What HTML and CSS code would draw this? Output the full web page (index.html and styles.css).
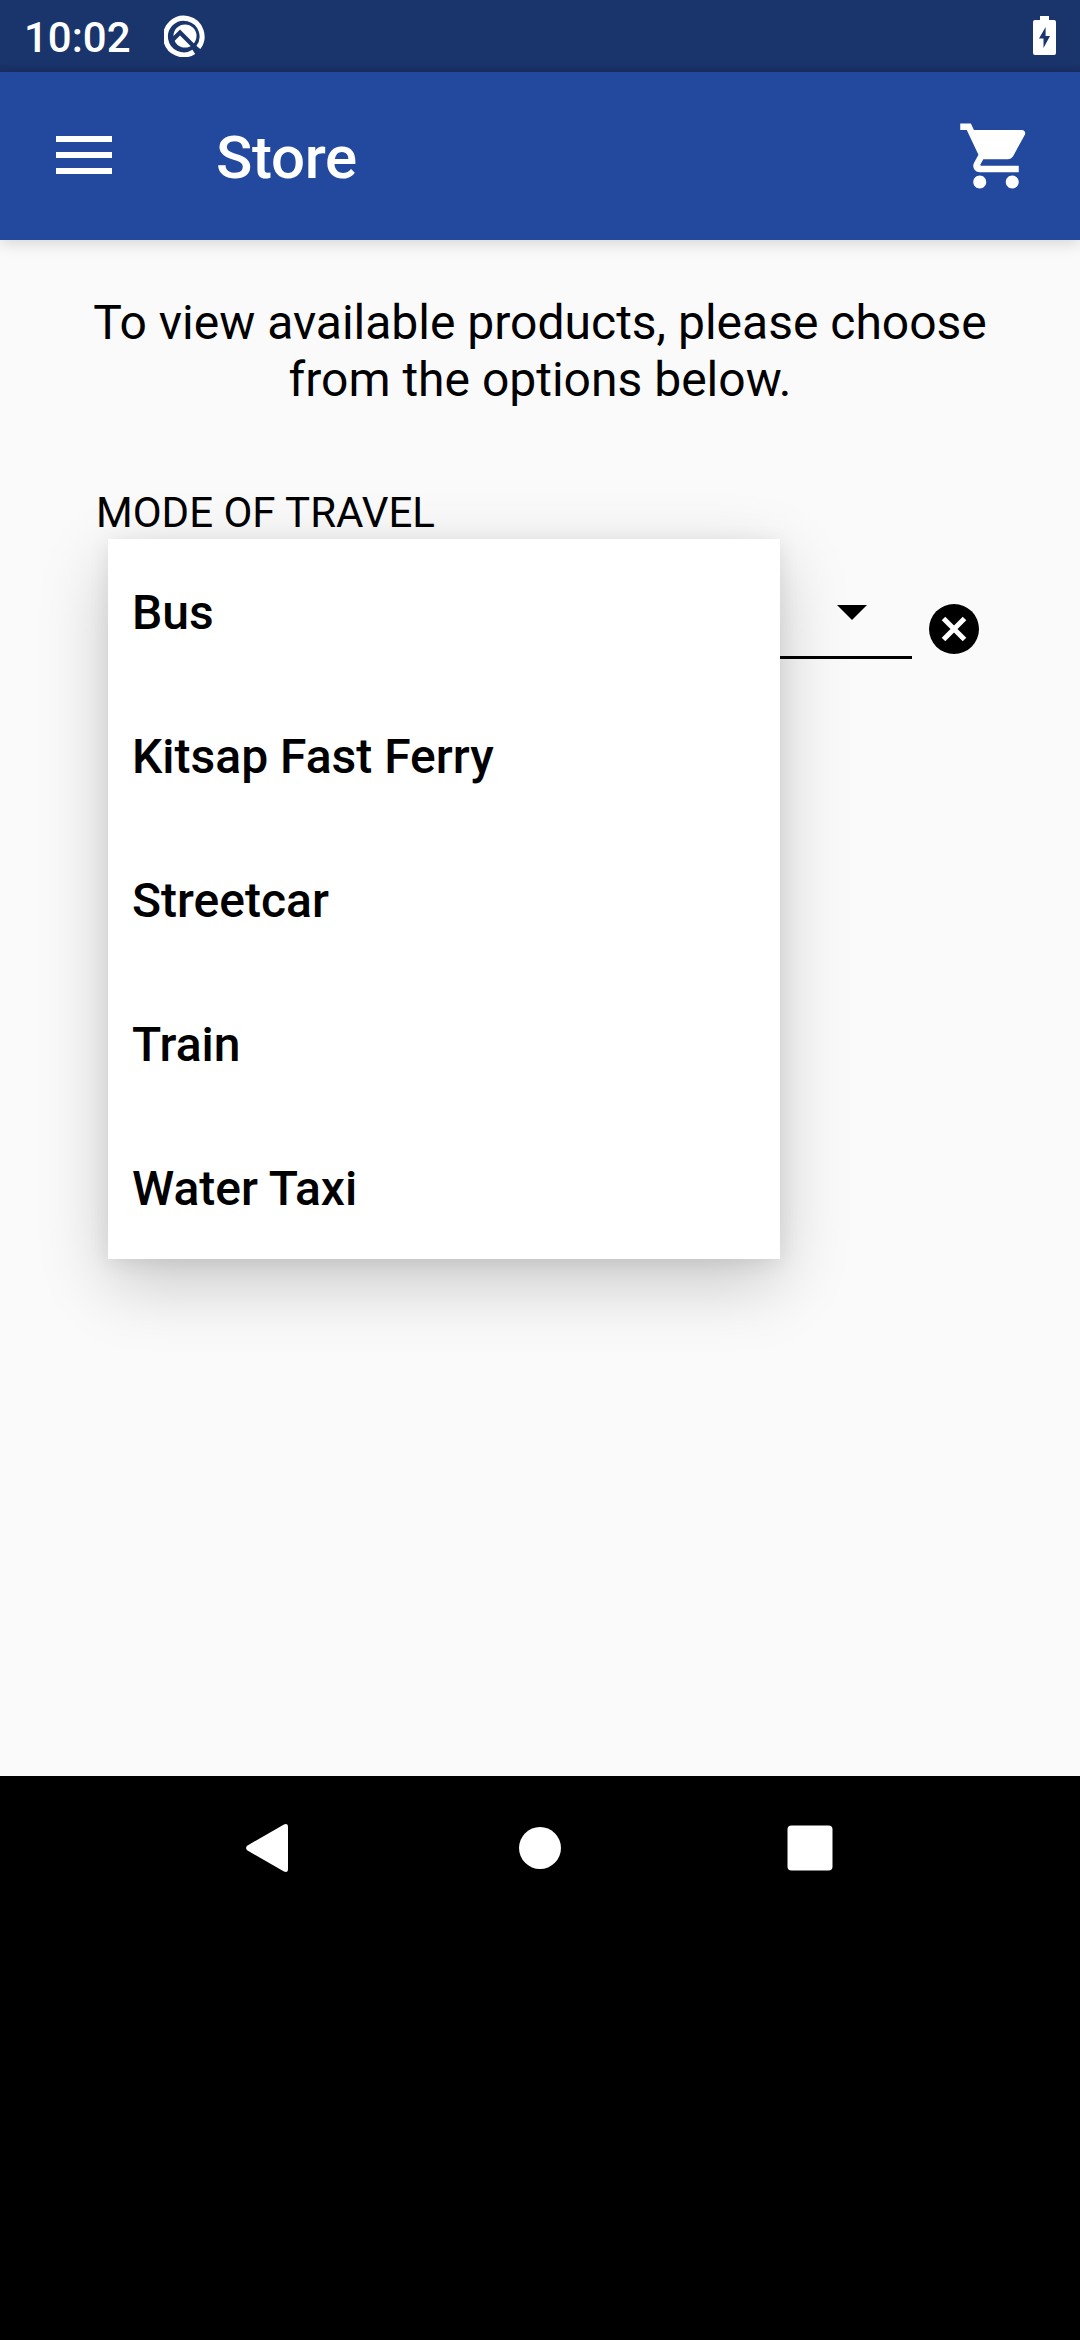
FILE: index.html
```html
<!DOCTYPE html>
<html lang="en">
<head>
<meta charset="utf-8">
<title>Store</title>
<link rel="stylesheet" href="styles.css">
</head>
<body>
<div class="screen">
  <div class="status-bar">
    <span class="clock">10:02</span>
    <svg class="notification" viewBox="0 0 42 42">
      <path d="M34.300 32.600A18.300 18.300 0 1 0 29.800 36.800" fill="none" stroke="#fff" stroke-width="5"/>
      <circle cx="21" cy="21" r="11.500" fill="#fff"/>
      <path d="M8.500 25L16 17.500L34 35.500" fill="none" stroke="#1a346c" stroke-width="4.200"/>
    </svg>
    <svg class="battery" viewBox="0 0 23 39">
      <path fill="#fff" fill-rule="evenodd" d="M7 0h9v4h5a2 2 0 0 1 2 2v31a2 2 0 0 1-2 2H2a2 2 0 0 1-2-2V6a2 2 0 0 1 2-2h5zM12.600 11L6 22.500h4.500V32L17 20h-4.400z"/>
    </svg>
  </div>
  <header class="app-bar">
    <svg class="menu-icon" viewBox="0 0 56 38"><path fill="#fff" d="M0 0h56v6H0zM0 16h56v6H0zM0 32h56v6H0z"/></svg>
    <h1 class="title">Store</h1>
    <svg class="cart" viewBox="0 0 24 24"><path fill="#fff" d="M7 18c-1.100 0-1.990.9-1.990 2S5.900 22 7 22s2-.9 2-2-.9-2-2-2zM1 2v2h2l3.600 7.590-1.350 2.450c-.16.280-.25.610-.25.960 0 1.100.9 2 2 2h12v-2H7.420c-.14 0-.25-.11-.25-.25l.03-.12.900-1.630h7.450c.75 0 1.410-.41 1.750-1.030l3.580-6.490c.08-.14.120-.31.120-.48 0-.55-.45-1-1-1H5.210l-.94-2H1zm16 16c-1.100 0-1.990.9-1.990 2s.89 2 1.990 2 2-.9 2-2-.9-2-2-2z"/></svg>
  </header>
  <main class="content">
    <p class="intro">To view available products, please choose<br>from the options below.</p>
    <div class="label">MODE OF TRAVEL</div>
    <div class="field">
      <div class="spinner">
        <svg class="arrow" viewBox="0 0 30 15"><path d="M0 0h30L15 15z"/></svg>
      </div>
      <svg class="clear" viewBox="0 0 50 50"><circle cx="25" cy="25" r="25"/><path d="M14.500 14.500l21 21M35.500 14.500l-21 21" stroke="#fff" stroke-width="5"/></svg>
      <ul class="menu">
        <li class="option">Bus</li>
        <li class="option">Kitsap Fast Ferry</li>
        <li class="option">Streetcar</li>
        <li class="option">Train</li>
        <li class="option">Water Taxi</li>
      </ul>
    </div>
  </main>
  <nav class="nav-bar">
    <svg class="nav-icon" viewBox="0 0 60 60"><path fill="#fff" d="M7.500 27.500L44 6.500Q48 5 48 9V51Q48 55 44 53.500L7.500 32.500Q4.500 30 7.500 27.500z"/></svg>
    <svg class="nav-icon" viewBox="0 0 60 60"><circle cx="30" cy="30" r="21" fill="#fff"/></svg>
    <svg class="nav-icon" viewBox="0 0 60 60"><rect x="7.500" y="7.500" width="45" height="45" rx="4" fill="#fff"/></svg>
  </nav>
</div>
</body>
</html>
```
FILE: styles.css
```css
* { box-sizing: border-box; }
body { margin: 0; font-family: Roboto, sans-serif; color: #000; background: #000; }
svg { display: block; flex: none; }
.screen { width: 1080px; height: 2340px; display: flex; flex-direction: column; background: #000; overflow: hidden; }
.status-bar { height: 72px; flex: none; display: flex; align-items: flex-start; padding: 0 24px; background: linear-gradient(#1a346c 64px, #182e60 72px); }
.clock { width: 140px; font-size: 42px; line-height: 50px; font-weight: 500; color: #fff; padding-top: 13px; }
.notification { width: 42px; height: 42px; margin-top: 15px; }
.battery { width: 23px; height: 39px; margin: 16px 0 0 auto; }
.app-bar { height: 168px; flex: none; display: flex; align-items: center; padding: 0 45px 0 56px; background: #23499f; box-shadow: 0 4px 14px rgba(0,0,0,.14); z-index: 1; }
.menu-icon { width: 56px; height: 38px; margin-bottom: 2px; }
.title { margin: 4px 0 0 104px; font-size: 60px; line-height: 70px; font-weight: 500; letter-spacing: -.3px; color: #fff; }
.cart { width: 78px; height: 78px; margin-left: auto; }
.content { height: 1536px; flex: none; background: #fafafa; padding: 54px 96px 0; }
.intro { margin: 0 -48px; text-align: center; font-size: 48px; line-height: 57px; white-space: nowrap; }
.label { margin-top: 80px; font-size: 42px; line-height: 50px; }
.field { position: relative; height: 121px; display: flex; }
.spinner { width: 804px; height: 121px; margin-left: 12px; border-bottom: 3px solid #000; padding: 67px 45px 0 0; }
.arrow { width: 30px; height: 15px; margin-left: auto; }
.clear { width: 50px; height: 50px; margin: 66px 0 0 17px; }
.menu { position: absolute; left: 12px; top: 1px; width: 672px; margin: 0; padding: 0; list-style: none; background: #fff; box-shadow: 0 24px 66px rgba(0,0,0,.2), 0 4px 20px rgba(0,0,0,.08); }
.option { height: 144px; padding: 2px 0 0 24px; font-size: 48px; line-height: 143px; font-weight: 500; }
.nav-bar { height: 144px; flex: none; display: flex; justify-content: center; align-items: center; gap: 210px; }
.nav-icon { width: 60px; height: 60px; }
```
